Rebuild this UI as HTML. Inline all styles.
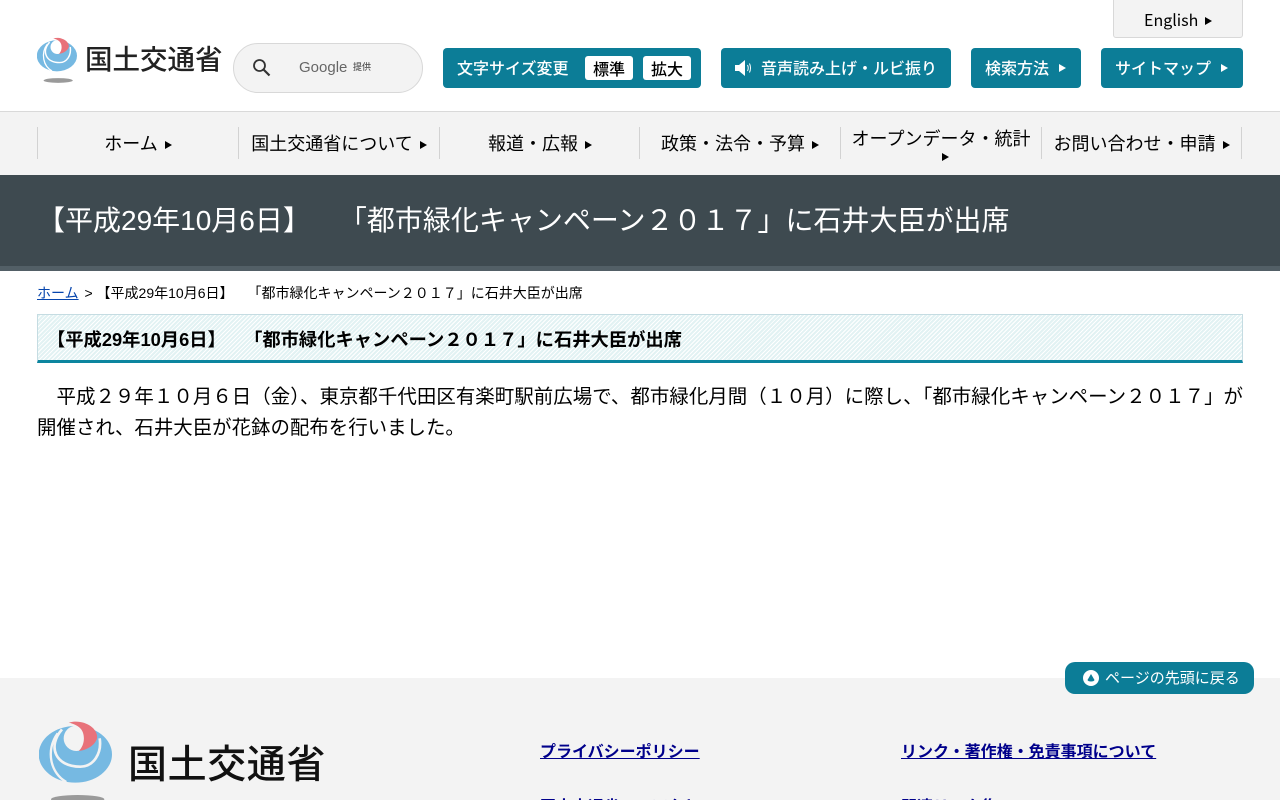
<!DOCTYPE html>
<html lang="ja"><head><meta charset="utf-8"><title>都市緑化キャンペーン</title>
<style>
*{box-sizing:border-box}
html,body{margin:0;padding:0;width:1280px;height:800px;overflow:hidden}
body{position:relative;background:#fff;color:#000;font-family:"Liberation Sans","Noto Sans CJK JP",sans-serif;text-spacing-trim:space-all}
.a{position:absolute;white-space:nowrap}
.n{font-family:"Noto Sans CJK JP",sans-serif}
.btn{position:absolute;top:48px;height:40px;background:#0c7d97;border-radius:4px;color:#fff;font:500 16px/39px "Noto Sans CJK JP",sans-serif;white-space:nowrap}
.tri{display:inline-block;width:0;height:0;border-left:7px solid currentColor;border-top:4.5px solid transparent;border-bottom:4.5px solid transparent}
.sz{position:absolute;top:8px;width:48px;height:24px;background:#fff;border-radius:3px;color:#000;text-align:center;font:500 16px/24px "Noto Sans CJK JP",sans-serif}
#nav{position:absolute;left:0;top:111px;width:1280px;height:65px;background:#f3f3f3;border-top:1px solid #d9d9d9;border-bottom:1px solid #d0d0d0}
#nav div{position:absolute;top:15px;height:32px;width:201px;padding-top:1px;border-left:1px solid #d2d2d2;text-align:center;font:18px/32px "Liberation Sans","Noto Sans CJK JP",sans-serif;color:#000}
#nav .tri{border-left-width:7px;border-top-width:4px;border-bottom-width:4px;margin-left:7px;vertical-align:1px}
.f{position:absolute;white-space:nowrap;font-size:16px;line-height:20px;font-weight:bold;color:#00008b;text-decoration:underline}
</style></head><body>

<svg class="a" style="left:37px;top:37px" width="40" height="46.600" viewBox="116 150 219 255">
<ellipse cx="225" cy="253" rx="110" ry="85" fill="#76b9e2"/>
<circle cx="228" cy="205" r="38" fill="#fff"/>
<path d="M185 178C140 230 165 290 240 290C280 290 305 250 298 205" fill="none" stroke="#fff" stroke-width="8"/>
<path d="M172 190C135 240 150 310 198 336" fill="none" stroke="#fff" stroke-width="7"/>
<path d="M205 158C250 145 295 175 290 205C285 225 260 240 235 243C255 225 255 190 240 175C230 165 215 160 205 158Z" fill="#e8727a"/>
<ellipse cx="232" cy="388" rx="80" ry="13" fill="#9a9a9a"/>
</svg>
<div class="a n" style="left:85px;top:37px;font-size:27.500px;font-weight:500;line-height:40px;color:#222">国土交通省</div>

<div class="a" style="left:233px;top:43px;width:190px;height:50px;background:#f3f3f3;border:1px solid #d8d8d8;border-radius:25px"></div>
<svg class="a" style="left:251px;top:57px" width="22" height="22" viewBox="0 0 22 22"><circle cx="8.500" cy="8.500" r="5.500" fill="none" stroke="#333" stroke-width="1.800"/><path d="M12.500 12.500L18.500 18.500" stroke="#333" stroke-width="2.200"/></svg>
<div class="a" style="left:299px;top:58px;font-size:15px;line-height:20px;color:#666">Google</div>
<div class="a n" style="left:353px;top:60px;font-size:9px;line-height:14px;color:#555;font-weight:500">提供</div>

<div class="a n" style="left:1113px;top:-1px;width:130px;height:39px;background:#f3f3f3;border:1px solid #d8d8d8;border-radius:0 0 3px 3px;font-size:16px;line-height:38px;text-align:center;color:#000">English <span class="tri" style="margin-left:3px;vertical-align:1px"></span></div>

<div class="btn" style="left:443px;width:258px;padding-left:14px">文字サイズ変更
<span class="sz" style="left:142px">標準</span><span class="sz" style="left:200px">拡大</span></div>
<div class="btn" style="left:721px;width:230px;padding-left:40px">音声読み上げ・ルビ振り
<svg class="a" style="left:13px;top:11px" width="20" height="18" viewBox="0 0 20 18"><path d="M1 6H5L11 1V17L5 12H1Z" fill="#fff"/><path d="M13.500 6Q15 9 13.500 12M15.500 4.500Q17.500 9 15.500 13.500" fill="none" stroke="#fff" stroke-width="1"/></svg></div>
<div class="btn" style="left:971px;width:110px;padding-left:14px">検索方法<span class="tri" style="position:absolute;left:88px;top:16px"></span></div>
<div class="btn" style="left:1101px;width:142px;padding-left:14px">サイトマップ<span class="tri" style="position:absolute;left:120px;top:16px"></span></div>

<div id="nav">
<div style="left:37px">ホーム<span class="tri"></span></div>
<div style="left:238px">国土交通省について<span class="tri"></span></div>
<div style="left:439px">報道・広報<span class="tri"></span></div>
<div style="left:639px">政策・法令・予算<span class="tri"></span></div>
<div style="left:840px;line-height:22px;padding-top:1px">オープンデータ・統計<span class="tri" style="position:absolute;left:101px;top:26px;margin:0"></span></div>
<div style="left:1041px;width:201px;border-right:1px solid #d2d2d2">お問い合わせ・申請<span class="tri"></span></div>
</div>

<div class="a" style="left:0;top:175px;width:1280px;height:96px;background:#3e4a50;border-bottom:5px solid #525f66"></div>
<div class="a" style="left:37px;top:201px;font-size:28px;line-height:40px;color:#fff">【平成29年10月6日】　「都市緑化キャンペーン２０１７」に石井大臣が出席</div>

<div class="a" style="left:37px;top:283px;font-size:14px;line-height:20px"><span style="color:#0645ad;text-decoration:underline;margin-right:2px">ホーム</span> &gt; 【平成29年10月6日】　「都市緑化キャンペーン２０１７」に石井大臣が出席</div>

<div class="a" style="left:37px;top:314px;width:1206px;height:49px;border:1px solid #c5dce2;border-bottom:3px solid #0c859f;background:repeating-linear-gradient(135deg,#e2f2f3 0,#e2f2f3 2px,#fff 2px,#fff 3px)"></div>
<div class="a" style="left:47px;top:327px;font-size:18.300px;line-height:26px;font-weight:bold">【平成29年10月6日】　「都市緑化キャンペーン２０１７」に石井大臣が出席</div>

<div class="a" style="left:37px;top:382px;width:1206px;font-size:19.450px;line-height:31px;white-space:normal;text-align:justify;text-spacing-trim:normal">　平成２９年１０月６日（金）、東京都千代田区有楽町駅前広場で、都市緑化月間（１０月）に際し、「都市緑化キャンペーン２０１７」が開催され、石井大臣が花鉢の配布を行いました。</div>

<div class="a" style="left:0;top:678px;width:1280px;height:122px;background:#f3f3f3"></div>

<div class="a n" style="left:1065px;top:662px;width:189px;height:32px;background:#0c7d97;border-radius:10px;color:#fff;font-size:15px;line-height:32px;padding-left:40px">ページの先頭に戻る
<svg class="a" style="left:18px;top:8px" width="16" height="16" viewBox="0 0 16 16"><circle cx="8" cy="8" r="8" fill="#fff"/><path d="M8 4L11.500 10Q11 11.500 8 11.500Q5 11.500 4.500 10Z" fill="#0c7d97"/></svg></div>

<svg class="a" style="left:38.700px;top:720px" width="73" height="85" viewBox="116 150 219 255">
<ellipse cx="225" cy="253" rx="110" ry="85" fill="#76b9e2"/>
<circle cx="228" cy="205" r="38" fill="#f3f3f3"/>
<path d="M185 178C140 230 165 290 240 290C280 290 305 250 298 205" fill="none" stroke="#f3f3f3" stroke-width="8"/>
<path d="M172 190C135 240 150 310 198 336" fill="none" stroke="#f3f3f3" stroke-width="7"/>
<path d="M205 158C250 145 295 175 290 205C285 225 260 240 235 243C255 225 255 190 240 175C230 165 215 160 205 158Z" fill="#e8727a"/>
<ellipse cx="232" cy="388" rx="80" ry="13" fill="#9a9a9a"/>
</svg>
<div class="a n" style="left:128px;top:734px;font-size:39px;font-weight:500;line-height:56px;color:#111;letter-spacing:.6px">国土交通省</div>

<div class="f" style="left:540px;top:743px">プライバシーポリシー</div>
<div class="f" style="left:901px;top:743px">リンク・著作権・免責事項について</div>
<div class="f" style="left:540px;top:798px">国土交通省へのアクセス</div>
<div class="f" style="left:901px;top:798px">関連リンク集</div>
</body></html>
